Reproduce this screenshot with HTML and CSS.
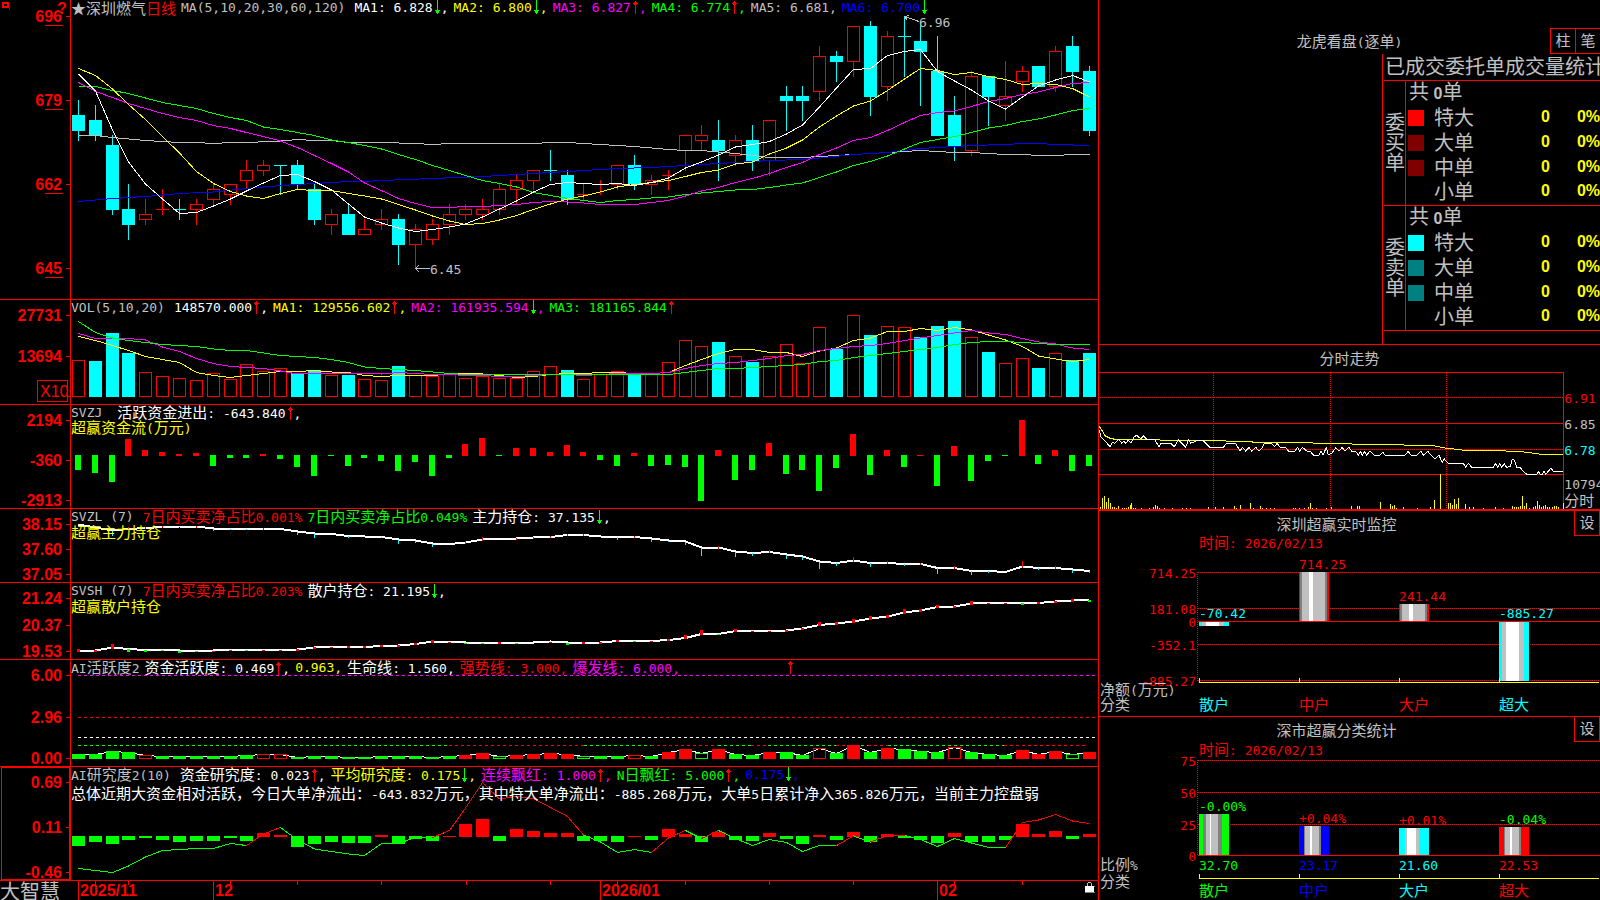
FILE: index.html
```html
<!DOCTYPE html>
<html lang="zh-CN">
<head>
<meta charset="utf-8">
<title>深圳燃气 日线 - 大智慧</title>
<link rel="stylesheet" href="styles.css">
</head>
<body>
<svg class="defs" aria-hidden="true">
  <symbol id="up" viewBox="0 0 8 15"><path class="up" d="M4 1h1v13h-1zM3 2h3v1h-3zM2 3h5v1h-5zM3 4h3v1h-3z"/></symbol>
  <symbol id="down" viewBox="0 0 8 15"><path class="down" d="M4 0h1v14h-1zM2 10h5v1h-5zM3 11h3v1h-3zM3 12h3v1h-3z"/></symbol>
</svg>
<div class="terminal">
  <main class="charts">
    <section class="panel">
      <svg class="chart" data-chart="price"></svg>
      <div class="legend">
        <div class="row">
          <span class="silver title-item">★深圳燃气<span class="red">日线</span></span>
          <span class="num silver title-item">MA(5,10,20,30,60,120)</span>
          <span class="num white">MA1: 6.828<svg class="arr"><use href="#down"/></svg>,</span>
          <span class="num yellow">MA2: 6.800<svg class="arr"><use href="#down"/></svg>,</span>
          <span class="num magenta">MA3: 6.827<svg class="arr"><use href="#up"/></svg>,</span>
          <span class="num green">MA4: 6.774<svg class="arr"><use href="#up"/></svg>,</span>
          <span class="num silver">MA5: 6.681,</span>
          <span class="num blue">MA6: 6.700<svg class="arr"><use href="#down"/></svg></span>
        </div>
      </div>
    </section>
    <section class="panel">
      <svg class="chart" data-chart="volume"></svg>
      <div class="legend">
        <div class="row">
          <span class="num silver title-item">VOL(5,10,20)</span>
          <span class="num white">148570.000<svg class="arr"><use href="#up"/></svg>,</span>
          <span class="num yellow">MA1: 129556.602<svg class="arr"><use href="#up"/></svg>,</span>
          <span class="num magenta">MA2: 161935.594<svg class="arr"><use href="#down"/></svg>,</span>
          <span class="num green">MA3: 181165.844<svg class="arr"><use href="#up"/></svg></span>
        </div>
      </div>
    </section>
    <section class="panel">
      <svg class="chart" data-chart="flow"></svg>
      <div class="legend">
        <div class="row">
          <span class="num silver wide-item">SVZJ</span>
          <span class="white">活跃资金进出<span class="num">: -643.840<svg class="arr"><use href="#up"/></svg>,</span></span>
        </div>
        <div class="row"><span class="yellow">超赢资金流<span class="num">(</span>万元<span class="num">)</span></span></div>
      </div>
    </section>
    <section class="panel">
      <svg class="chart" data-chart="major"></svg>
      <div class="legend">
        <div class="row">
          <span class="num silver title-item">SVZL (7)</span>
          <span class="red"><span class="num">7</span>日内买卖净占比<span class="num">0.001%</span></span>
          <span class="green"><span class="num">7</span>日内买卖净占比<span class="num">0.049%</span></span>
          <span class="white">主力持仓<span class="num">: 37.135<svg class="arr"><use href="#down"/></svg>,</span></span>
        </div>
        <div class="row"><span class="yellow">超赢主力持仓</span></div>
      </div>
    </section>
    <section class="panel">
      <svg class="chart" data-chart="retail"></svg>
      <div class="legend">
        <div class="row">
          <span class="num silver title-item">SVSH (7)</span>
          <span class="red"><span class="num">7</span>日内买卖净占比<span class="num">0.203%</span></span>
          <span class="white">散户持仓<span class="num">: 21.195<svg class="arr"><use href="#down"/></svg>,</span></span>
        </div>
        <div class="row"><span class="yellow">超赢散户持仓</span></div>
      </div>
    </section>
    <section class="panel">
      <svg class="chart" data-chart="active"></svg>
      <div class="legend">
        <div class="row">
          <span class="silver"><span class="num">AI</span>活跃度<span class="num">2</span></span>
          <span class="white">资金活跃度<span class="num">: 0.469<svg class="arr"><use href="#up"/></svg>,</span></span>
          <span class="num yellow">0.963,</span>
          <span class="white">生命线<span class="num">: 1.560,</span></span>
          <span class="red">强势线<span class="num">: 3.000,</span></span>
          <span class="magenta">爆发线<span class="num">: 6.000,</span></span>
          <svg class="arr far-arr"><use href="#up"/></svg>
        </div>
      </div>
    </section>
    <section class="panel">
      <svg class="chart" data-chart="study"></svg>
      <div class="legend">
        <div class="row">
          <span class="silver title-item"><span class="num">AI</span>研究度<span class="num">2(10)</span></span>
          <span class="white">资金研究度<span class="num">: 0.023<svg class="arr"><use href="#up"/></svg>,</span></span>
          <span class="yellow">平均研究度<span class="num">: 0.175<svg class="arr"><use href="#down"/></svg>,</span></span>
          <span class="magenta">连续飘红<span class="num">: 1.000<svg class="arr"><use href="#up"/></svg>,</span></span>
          <span class="green"><span class="num">N</span>日飘红<span class="num">: 5.000<svg class="arr"><use href="#up"/></svg>,</span></span>
          <span class="num blue">0.175<svg class="arr"><use href="#down"/></svg>,</span>
        </div>
        <p class="row summary white"><span>总体近期大资金相对活跃，今日大单净流出：<span class="num">-643.832</span>万元，其中特大单净流出：<span class="num">-885.268</span>万元，大单<span class="num">5</span>日累计净入<span class="num">365.826</span>万元，当前主力控盘弱</span></p>
      </div>
    </section>
    <footer class="timeline">
      <svg class="chart" data-chart="time"></svg>
      <div class="brand">大智慧</div>
    </footer>
  </main>

  <aside class="side">
    <section class="orders">
      <header class="orders-head">
        <h2>龙虎看盘<span class="num">(</span>逐单<span class="num">)</span></h2>
        <div class="modes"><button type="button">柱</button><button type="button">笔</button></div>
      </header>
      <div class="stats">
        <h3>已成交委托单成交量统计</h3>
        <table>
          <colgroup><col class="c-side"><col class="c-key"><col class="c-name"><col class="c-count"><col class="c-share"></colgroup>
          <tbody>
            <tr><th rowspan="5"><span>委买单</span></th><td colspan="4" class="total">共 <b>0</b>单</td></tr>
            <tr><td><i class="key k-red"></i></td><td>特大</td><td class="v">0</td><td class="v">0%</td></tr>
            <tr><td><i class="key k-maroon"></i></td><td>大单</td><td class="v">0</td><td class="v">0%</td></tr>
            <tr><td><i class="key k-maroon"></i></td><td>中单</td><td class="v">0</td><td class="v">0%</td></tr>
            <tr><td></td><td>小单</td><td class="v">0</td><td class="v">0%</td></tr>
          </tbody>
          <tbody>
            <tr><th rowspan="5"><span>委卖单</span></th><td colspan="4" class="total">共 <b>0</b>单</td></tr>
            <tr><td><i class="key k-cyan"></i></td><td>特大</td><td class="v">0</td><td class="v">0%</td></tr>
            <tr><td><i class="key k-teal"></i></td><td>大单</td><td class="v">0</td><td class="v">0%</td></tr>
            <tr><td><i class="key k-teal"></i></td><td>中单</td><td class="v">0</td><td class="v">0%</td></tr>
            <tr><td></td><td>小单</td><td class="v">0</td><td class="v">0%</td></tr>
          </tbody>
        </table>
      </div>
    </section>
    <section class="intraday">
      <h2>分时走势</h2>
      <svg class="chart" data-chart="intraday"></svg>
    </section>
    <section class="monitor ruled">
      <svg class="chart" data-chart="monitor"></svg>
      <header class="monitor-head"><h2>深圳超赢实时监控</h2><button type="button">设</button></header>
    </section>
    <section class="monitor">
      <svg class="chart" data-chart="classes"></svg>
      <header class="monitor-head"><h2>深市超赢分类统计</h2><button type="button">设</button></header>
    </section>
  </aside>
</div>
<script src="app.js"></script>
</body>
</html>
```
FILE: styles.css
```css
* { box-sizing: border-box; }
body {
  margin: 0;
  background: #000;
  color: #c0c0c0;
  font: 15px/15px "Noto Sans CJK SC", sans-serif;
}
h2, h3, p { margin: 0; font-size: 15px; font-weight: 400; }
.defs { display: none; }
.up { fill: #f00; }
.down { fill: #0f0; }

.silver { color: #c0c0c0; }
.white { color: #fff; }
.red { color: #f00; }
.yellow { color: #ff0; }
.magenta { color: #f0f; }
.green { color: #0f0; }
.blue { color: #00f; }

.num {
  font-family: "DejaVu Sans Mono", "Liberation Mono", monospace;
  font-size: 13px;
  white-space: pre;
}

.terminal {
  display: grid;
  grid-template-columns: minmax(0, 1099fr) minmax(0, 501fr);
  grid-template-rows: minmax(0, 1fr);
  height: 100vh;
  overflow: hidden;
}
.charts {
  display: grid;
  grid-template-rows:
    minmax(0, 300fr) minmax(0, 105fr) minmax(0, 104fr) minmax(0, 74fr)
    minmax(0, 77fr) minmax(0, 107fr) minmax(0, 114fr) minmax(0, 19fr);
  border-right: 1px solid #f00;
  min-width: 0;
  min-height: 0;
}
.panel, .timeline, .monitor {
  display: grid;
  grid-template: minmax(0, 1fr) / minmax(0, 1fr);
  min-height: 0;
}
.panel { border-bottom: 1px solid #f00; }
.panel > *, .timeline > *, .monitor > * { grid-area: 1 / 1; }
.chart { display: block; width: 100%; height: 100%; min-height: 0; overflow: hidden; }

.legend { padding-left: 71px; white-space: nowrap; }
.row { display: flex; gap: 5px; height: 15px; align-items: center; }
.title-item { margin-right: 4px; }
.title-item:first-child:has(.red) { margin-right: 0; }
.wide-item { margin-right: 10px; }
.arr { width: 8px; height: 15px; vertical-align: -3px; }
.far-arr { margin-left: 101px; }
.summary { margin-top: 4px; }
.brand { font-size: 20px; line-height: 19px; }

/* svg text */
.t { font: 13px "DejaVu Sans Mono", "Liberation Mono", monospace; white-space: pre; }
.t .cn { font: 15px "Noto Sans CJK SC", sans-serif; }
.axis { font: bold 16px "Liberation Sans", Arial, sans-serif; fill: #f00; }
.scale { font: 16px "Liberation Sans", Arial, sans-serif; fill: #f00; }

.side {
  display: grid;
  grid-template-rows: minmax(0, 345fr) minmax(0, 166fr) minmax(0, 206fr) minmax(0, 183fr);
  min-width: 0;
  min-height: 0;
}
button {
  width: 26px;
  height: 26px;
  padding: 0 0 3px;
  border: 1px solid #f00;
  background: #000;
  color: #c0c0c0;
  font: 15px/15px "Noto Sans CJK SC", sans-serif;
}

.orders {
  display: grid;
  grid-template-rows: 54px minmax(0, 1fr);
  border-bottom: 1px solid #f00;
  overflow: hidden;
}
.orders-head {
  display: grid;
  grid-template-columns: 1fr auto 1fr;
  align-items: end;
}
.orders-head h2 { grid-column: 2; padding-bottom: 4px; }
.modes { display: flex; justify-content: flex-end; }
.modes button { border-right: 0; width: 25px; }
.stats {
  width: 218px;
  margin-left: auto;
  padding-left: 1px;
  border-left: 1px solid #f00;
  overflow: hidden;
  font-size: 20px;
}
.stats h3 {
  height: 27px;
  padding-left: 1px;
  border-bottom: 1px solid #f00;
  font-size: 20px;
  line-height: 24px;
  white-space: nowrap;
}
table {
  width: 216px;
  table-layout: fixed;
  border-spacing: 0;
}
.c-side { width: 22px; }
.c-key { width: 28px; }
.c-name { width: 60px; }
.c-count { width: 56px; }
.c-share { width: 50px; }
tr { height: 25px; }
td { padding: 0 0 4px; line-height: 18px; white-space: nowrap; }
th {
  padding: 0;
  border-right: 1px solid #f00;
  border-bottom: 1px solid #f00;
  font-weight: 400;
  line-height: 20px;
}
th span { writing-mode: vertical-rl; }
tr:last-child td { border-bottom: 1px solid #f00; }
.total { padding-left: 3px; }
.total b, .v { font: bold 16px/16px "Liberation Sans", Arial, sans-serif; }
.v { color: #ff0; text-align: right; }
.key { display: block; width: 16px; height: 16px; margin: 3px 0 0 2px; }
.k-red { background: #f00; }
.k-maroon { background: #800000; }
.k-cyan { background: #0ff; }
.k-teal { background: #008080; }

.intraday { display: grid; grid-template-rows: 27px minmax(0, 1fr); min-height: 0; }
.intraday h2 { text-align: center; line-height: 25px; }
.ruled { border-bottom: 1px solid #f00; }
.monitor-head { display: flex; align-items: start; }
.monitor-head h2 { flex: 1; text-align: center; line-height: 25px; }
.monitor-head button { height: 25px; border-top: 0; }
```
FILE: app.js
```js
const RED = '#f00', CYAN = '#0ff', GREEN = '#0f0', YELLOW = '#ff0', WHITE = '#fff',
  MAGENTA = '#f0f', BLUE = '#00f', SILVER = '#c0c0c0', GRAY = '#808080';

/* A drawing surface: maps a chart's own coordinates to the size of its svg. */
class Surface {
  constructor(svg, d) {
    const box = svg.getBoundingClientRect();
    this.svg = svg;
    this.d = d;
    this.fixed = d.fixed || 0;
    this.kx = (box.width - this.fixed) / (d.w - this.fixed);
    this.ky = box.height / d.h;
    this.out = [];
  }
  x(v) { v -= this.d.x; return v <= this.fixed ? v : this.fixed + (v - this.fixed) * this.kx; }
  y(v) { return (v - this.d.y) * this.ky; }
  rect(x0, y0, x1, y1, fill) {
    const a = Math.round(this.x(x0)), b = Math.round(this.y(y0));
    const w = Math.max(1, Math.round(this.x(x1)) - a), h = Math.max(1, Math.round(this.y(y1)) - b);
    this.out.push(`<rect x="${a}" y="${b}" width="${w}" height="${h}" fill="${fill}"/>`);
  }
  box(x0, y0, x1, y1, stroke) {
    const a = Math.round(this.x(x0)), b = Math.round(this.y(y0));
    const w = Math.round(this.x(x1)) - a - 1, h = Math.round(this.y(y1)) - b - 1;
    this.out.push(`<rect x="${a + .5}" y="${b + .5}" width="${w}" height="${Math.max(1, h)}" fill="none" stroke="${stroke}"/>`);
  }
  line(points, stroke, width = 1, dash = '') {
    const p = points.map(([x, y]) => `${this.x(x).toFixed(1)},${this.y(y).toFixed(1)}`).join(' ');
    this.out.push(`<polyline points="${p}" fill="none" stroke="${stroke}" stroke-width="${width}" stroke-dasharray="${dash}"/>`);
  }
  h(y, x0, x1, stroke, dash) {
    const v = Math.floor(this.y(y) + .01) + .5;
    this.out.push(`<line x1="${this.x(x0)}" x2="${this.x(x1)}" y1="${v}" y2="${v}" stroke="${stroke}" stroke-dasharray="${dash || ''}"/>`);
  }
  v(x, y0, y1, stroke, dash) {
    const u = Math.floor(this.x(x) + .01) + .5;
    this.out.push(`<line y1="${this.y(y0)}" y2="${this.y(y1)}" x1="${u}" x2="${u}" stroke="${stroke}" stroke-dasharray="${dash || ''}"/>`);
  }
  text(x, y, str, fill, cls = 't', anchor = 'start') {
    const body = str.replace(/[\u4e00-\u9fff]+/g, m => `<tspan class="cn">${m}</tspan>`);
    const drop = cls === 't' ? 5 : 6;
    this.out.push(`<text class="${cls}" x="${this.x(x)}" y="${Math.round(this.y(y)) + drop}" fill="${fill}" text-anchor="${anchor}">${body}</text>`);
  }
  raw(s) { this.out.push(s); }
  done() { this.svg.innerHTML = `<g shape-rendering="crispEdges">${this.out.join('')}</g>`; }
}

const X = i => Math.floor(78.4 + 16.85 * i);
const series = ys => Array.isArray(ys)
  ? ys.map((y, i) => [X(i) + .5, y])
  : Object.entries(ys).map(([i, y]) => [X(+i) + .5, y]);

function axis(s, top, bottom, labels) {
  s.v(70, top, bottom, RED);
  for (const [label, y] of labels) {
    s.h(y, 66, 70, RED);
    s.text(62, y, label, RED, 'axis', 'end');
  }
}

/* [rising, high, body top, body bottom, low] for each trading day */
const candles = [
  [0,100,115,131,141],[0,105,120,136,141],[0,135,145,210,215],[0,184,209,225,240],[1,199,214,220,225],
  [1,189,209,210,215],[0,199,209,210,220],[1,199,204,210,225],[1,184,189,200,205],[1,184,184,195,205],
  [1,160,170,181,189],[1,160,165,171,176],[0,165,165,166,195],[0,160,165,184,189],[0,184,189,220,225],
  [1,209,214,225,235],[0,204,214,235,235],[1,219,229,235,235],[1,209,219,225,230],[0,214,219,245,265],
  [1,224,229,245,268],[1,219,224,240,245],[1,204,214,225,235],[1,204,209,215,220],[1,199,209,215,220],
  [1,184,189,210,215],[1,175,180,190,204],[1,170,170,181,190],[0,150,170,171,181],[0,170,175,200,205],
  [1,184,194,195,200],[1,180,184,185,195],[1,165,165,185,190],[0,155,165,184,190],[1,175,180,185,195],
  [1,170,175,176,190],[1,135,135,151,171],[1,125,135,141,151],[0,120,140,151,181],[1,135,140,156,166],
  [0,125,140,161,171],[1,120,120,161,176],[0,86,96,101,131],[0,86,96,101,121],[1,46,56,92,101],
  [0,51,56,62,82],[1,26,26,62,77],[0,21,26,97,116],[1,31,36,87,101],[0,16,36,37,77],
  [0,21,41,52,106],[0,36,71,136,136],[0,96,115,146,161],[1,71,76,151,156],[0,76,76,97,126],
  [1,61,96,106,121],[1,66,71,82,92],[0,66,66,87,87],[1,46,51,87,92],[0,36,46,72,87],[0,66,71,131,136]];

const ma = {
  silver: {0:135.5,1:135.5,2:137.5,4:140.5,6:142.5,7:142.5,8:143.5,9:142.5,10:142.5,12:141,13:139.5,14:140.5,15:140.5,16:142.5,18:142.5,20:143.5,21:144.5,22:143.5,27:143.5,28:142.5,29:142.5,31:144.5,33:146.5,35:149.5,36:150.5,37:150.5,39:153.5,41:157.5,43:157.5,45:155.5,47:153.5,50:150.5,52:152.5,53:152.5,55:154.5,56:154.5,57:155.5,58:155.5,59:154.5,60:154.5},
  blue: {0:201.5,2:198.5,4:196.5,6:193.5,8:192,10:188.5,12:185.5,14:183.5,16:181.5,17:181.5,18:180.5,21:178.5,24:176.5,27:173.5,29:171.5,32:168.5,34:167.5,36:165.5,38:163.5,40:161.5,41:160.5,43:159.5,44:158,46:154.5,48:152.5,50:148.5,52:146.5,53:145.5,55:144.5,56:143.5,57:143.5,58:144.5,60:145.5},
  green: [86.5,86.5,90.5,93.5,98,102.5,105.5,108.5,113.5,117.5,120.5,127,129.5,132.5,135.5,140,142.5,145.5,149,154.5,159.5,165.5,170.5,175.5,180.5,183.5,187,192.5,195.5,198.5,200.5,202.5,200.5,199.5,198,197,194.5,193,191.5,190,189.5,187.5,185,183,177.5,172,165.5,161.5,156,149,142.5,139.5,136.5,132.5,128,125.5,121.5,119,115,110.5,108.5],
  magenta: [82.5,91.5,97.5,103.5,108.5,113.5,117.5,120.5,125.5,128.5,132.5,136.5,141,147.5,155.5,163.5,172,183,190.5,198.5,203.5,207.5,207.5,206.5,206.5,205.5,204.5,202.5,201.5,202,203,204.5,204.5,204.5,202.5,200.5,196,191,187.5,182.5,178.5,173.5,167.5,162.5,154.5,148,140.5,137.5,130.5,122.5,115.5,112.5,111,106.5,101.5,98.5,94.5,92,87.5,83.5,82.5],
  yellow: [68.5,75.5,89,104.5,119.5,136.5,153,171.5,183.5,191.5,196,198.5,193.5,189.5,190.5,190.5,193.5,196,199,204.5,210,216,221,224.5,223.5,220,215.5,209.5,204,199,196,192,187,184.5,182.5,180.5,176.5,172.5,170,164,162,154,148,140,127,116,106,101,90.5,79,68.5,70.5,74.5,72.5,76.5,79.5,84.5,83.5,84.5,88.5,97],
  white: [74,91,130,162,184,199,213.5,212.5,206,199,191,183,175.5,174.5,181.5,190,204,217,223,228,231.5,229.5,227,224,217,209,201,192,184.5,182.5,183.5,184.5,183.5,185.5,182.5,178,168,162,155,147,144.5,141.5,134,125,107,88,69.5,68.5,55.5,51.5,49.5,71.5,81,90,101,109,97,86,80,75.5,82]
};

/* "c" falling day, "r" rising day; top of each column */
const volumeKind = 'rcccrrrrrrrrrccrcrrcrrrrrrrrrcrrrcrrrrcrcrrrrcrcrrcccrcrrcrcc';
const volumeTop = [360,361,333,353,372,376,378,380,373,379,364,371,368,373,370,375,375,379,380,366,375,376,374,378,376,378,378,371,366,370,379,374,371,374,374,362,340,346,342,356,362,356,344,363,327,349,315,335,326,327,337,326,321,337,352,363,358,368,353,360,353];
const volumeMa = {
  yellow: [336.5,340.5,345.5,350.5,356.5,359.5,362.5,372.5,375.5,377.5,375.5,373.5,371.5,371.5,370.5,372,372.5,375.5,376.5,375.5,375.5,375.5,374,373.5,374,375.5,377.5,376.5,374.5,373.5,373.5,372.5,372.5,373.5,373.5,372.5,365.5,359.5,353.5,349.5,349.5,352.5,352.5,356.5,351,348,340.5,338,331.5,331.5,328.5,330.5,327.5,330,335,340,346.5,356,359,361.5,359.5],
  magenta: [333.5,338.5,338.5,338.5,340,347,351.5,358.5,363.5,366.5,367.5,368.5,371,374,373.5,373.5,373.5,373.5,374,372.5,373.5,374.5,374.5,375.5,375.5,376.5,376.5,375.5,374.5,374.5,375.5,374.5,373.5,373.5,373.5,372.5,368.5,365.5,363.5,362.5,360.5,358.5,355.5,354.5,350.5,348.5,346.5,345.5,343.5,340.5,338,335.5,333,330.5,333,334.5,338.5,342,344,348,349.5],
  green: [321.5,332.5,338,340.5,342.5,344.5,345.5,346.5,349,350.5,350.5,353,355.5,356.5,357.5,359.5,362.5,367,368.5,369.5,370.5,372,373.5,374.5,374.5,374.5,374.5,374.5,374.5,374.5,374.5,374.5,374.5,374.5,374.5,374.5,372.5,370.5,368.5,368.5,367.5,366.5,365.5,364.5,361.5,360.5,357.5,355.5,353.5,351.5,349.5,347.5,344.5,342.5,341.5,341.5,342.5,343.5,344.5,344.5,344.5]
};

/* far end of each column; above the zero line is an inflow */
const flow = [470,473,482,439,450,452,454,453,466,458,458,454,459,467,476,457,466,458,461,471,462,476,458,444,438,457,448,448,452,445,452,460,466,453,466,465,467,501,450,480,470,443,474,470,491,468,434,475,450,467,455,486,446,481,461,457,420,464,450,471,466];

const major = [524.5,527.5,530.5,529,528,527,526.5,526.5,528.5,529,529,529,529,531.5,533.5,534,536,536.5,537,539.5,540.5,543.5,544,542.5,539.5,539,538.5,537.5,537,535,535,536.5,537,537,538.5,540.5,541.5,547.5,547.5,551.5,553,552,554.5,556.5,561.5,563,560.5,563,563,564,564,568,568,571,571,572,566.5,568,568,569.5,571];
const majorDown = {2:5,8:2,9:1,10:1,13:3,14:4,16:2,18:1,19:4,20:2,21:3,32:3,34:3,35:1,36:3,37:8,39:5,40:3,42:4,43:3,44:7,45:3,47:4,49:2,51:6,53:4,54:2,57:2,59:3,60:2};
const majorUp = {3:2,4:1,5:1,7:1,11:1,23:2,24:3,26:1,27:1,28:1,29:1,30:1,33:1,38:2,41:2,46:4,48:2,50:1,52:2,56:6,58:2};

const retail = [650.5,650.5,647.5,649,650,650,650.5,651,650.5,650,650,650,650,649.5,647.5,647,647,647,646,645.5,644,641.5,641.5,642.5,642.5,642.5,642.5,642.5,641.5,642.5,642.5,642.5,641,641,641,640,638,634,634,631,631,631,630.5,628.5,625,623.5,621.5,618.5,616.5,612.5,610.5,607,606.5,603.5,602.5,602.5,603,603,601.5,600.5,600];
const retailUp = {0:2,1:1,2:4,8:0,9:0,11:0,12:0,13:1,14:1,15:0,16:1,17:1,18:1,19:1,20:1,21:2,22:0,25:1,28:0,30:1,31:1,32:1,34:0,35:1,36:3,37:4,39:2,40:0,41:0,42:1,43:1,44:3,45:2,46:3,47:3,48:2,49:4,50:2,51:2,52:1,53:3,54:0,55:0,57:1,58:1,59:2};
const retailDown = {3:2,4:1,5:0,6:1,7:0,10:0,23:0,24:0,26:0,29:1,33:0,38:0,56:1,60:1};

/* g/r solid, G/R hollow */
const activeKind = 'ggggRggggggRRggggggggggrrGrrrrGggRgrrGrggrggRgrgrgggRgggrrrGr';
const activeTop = [754,754,751,752,755,756,756,756,756,756,755,754,754,757,756,756,757,757,756,756,756,757,756,755,753,756,755,754,753,754,756,756,756,755,756,752,749,753,749,754,755,752,752,755,748,753,745,752,748,749,751,752,747,752,754,755,750,754,751,754,752];
const activeBand = [[78,449,GREEN],[449,584,RED],[584,651,GREEN],[651,718,RED],[718,751,GREEN],[751,768,RED],[768,836,GREEN],[836,855,RED],[855,868,GREEN],[868,888,RED],[888,1004,GREEN],[1004,1086,RED]];

const study = [846,842,844,840,838,840,842,841,841,838,841,833,835,847,844,842,843,843,835,844,839,841,836,824,819,841,829,831,833,833,841,841,842,836,840,829,834,842,832,840,841,833,839,844,835,840,832,842,834,838,840,843,833,842,842,840,824,834,831,839,834];
const studyLine = [868.5,870.5,872.5,866,857,850.5,849.5,848.5,848.5,843.5,845.5,834,827.5,840,849,851.5,854,855.5,843.5,843.5,837.5,837.5,830.5,808,782.5,799,796.5,798.5,807.5,816.5,835,842,852.5,849.5,852.5,838,830.5,838.5,830.5,838.5,845.5,839.5,842.5,851.5,845.5,845.5,836,842,835.5,835.5,839.5,846.5,838.5,843,847.5,847.5,822.5,820,814.5,821,823.5];
const studyRed = [[10,12],[21,30],[34,36],[37,38],[45,46],[47,49],[55,60]];

const avgPrice = [[12,258],[20,270],[30,287],[45,295],[60,298],[180,298],[200,301],[385,302],[400,304],[470,305],[475,307],[645,308],[660,310],[768,311],[775,313],[885,314],[1015,317],[1050,324],[1110,331],[1210,332],[1280,335],[1340,343],[1404,344]];
const lastPrice = [[12,270],[18,290],[30,303],[45,320],[52,308],[60,310],[72,298],[80,310],[86,304],[92,310],[100,301],[108,308],[118,290],[125,286],[138,297],[145,287],[155,298],[180,300],[192,320],[198,310],[228,310],[238,320],[250,300],[260,310],[272,322],[280,300],[287,310],[310,300],[325,302],[345,322],[385,322],[395,310],[422,310],[435,333],[443,322],[452,333],[462,322],[470,333],[482,322],[492,333],[500,325],[508,310],[530,310],[538,320],[547,310],[555,322],[572,322],[580,333],[600,333],[608,322],[614,333],[622,322],[635,333],[645,333],[655,345],[672,345],[678,334],[684,345],[694,323],[700,345],[710,340],[722,324],[732,334],[742,322],[750,334],[762,322],[770,334],[782,334],[790,345],[796,334],[802,345],[808,334],[815,345],[825,333],[838,345],[855,345],[864,336],[870,346],[930,346],[940,334],[948,346],[965,346],[978,334],[985,346],[998,334],[1008,346],[1020,358],[1032,346],[1042,368],[1048,357],[1060,370],[1105,370],[1112,382],[1120,370],[1130,382],[1195,382],[1202,370],[1208,382],[1214,372],[1220,382],[1228,372],[1235,382],[1246,380],[1252,358],[1258,360],[1265,382],[1275,382],[1285,394],[1295,403],[1325,403],[1330,394],[1335,403],[1342,403],[1347,394],[1352,403],[1368,384],[1375,394],[1404,394]];
const tickVolume = [[16,500],[22,474],[28,468],[34,486],[40,474],[46,489],[52,501],[58,501],[64,503],[70,498],[82,504],[88,504],[94,504],[100,502],[106,495],[109,489],[115,503],[121,503],[139,504],[163,504],[175,500],[181,495],[187,498],[193,504],[208,504],[232,504],[262,504],[274,504],[286,504],[338,500],[361,501],[385,500],[418,498],[424,504],[436,495],[466,489],[475,504],[496,498],[502,504],[514,504],[526,504],[538,504],[595,504],[601,504],[613,504],[628,504],[640,500],[646,489],[652,504],[664,504],[694,504],[709,501],[769,498],[787,498],[793,498],[856,486],[886,492],[892,498],[898,495],[904,504],[925,501],[967,504],[1006,501],[1018,480],[1036,402],[1060,489],[1066,489],[1072,495],[1078,477],[1084,492],[1090,474],[1111,492],[1123,502],[1135,501],[1163,504],[1199,501],[1225,504],[1252,498],[1258,500],[1264,501],[1270,500],[1276,497],[1282,468],[1288,498],[1294,489],[1303,503],[1313,500],[1320,498],[1327,483],[1333,495],[1339,500],[1345,498],[1351,495],[1357,500],[1363,502],[1370,501],[1376,498],[1382,498],[1388,501],[1405,489]];

/* A shaded cylinder: bands are [end offset, colour] across a 30-unit width. */
function cylinder(s, x, top, bottom, bands) {
  let from = 0;
  for (const [to, fill] of bands) {
    s.rect(x + from, top, x + to, bottom, fill);
    from = to;
  }
}
const thin = c => [[1,c],[3,GRAY],[10,SILVER],[14,WHITE],[26,SILVER],[28,GRAY],[30,c]];
const lit = c => [[3,c],[7,SILVER],[20,WHITE],[25,SILVER],[30,c]];
const inner = c => [[5,c],[6,GRAY],[11,SILVER],[13,WHITE],[20,SILVER],[22,GRAY],[30,c]];

const left = (y, h) => ({ x: 0, y, w: 1098, h, fixed: 71 });

const charts = {
  price: [left(0, 299), s => {
    axis(s, 0, 299, [['696', 16], ['679', 100], ['662', 184], ['645', 268]]);
    for (const y of [25, 109, 193, 277]) s.h(y, 45, 63, RED);
    s.raw(`<path d="M2 2h7v6h-7zM4 4v2h3v-2z" fill="${RED}" fill-rule="evenodd"/><path d="M4 8h1v1h4v-1h1v2h-1v-1h-4z" fill="#a00"/>`);
    s.raw('<text class="axis" x="57" y="14">?</text>');
    candles.forEach(([up, high, top, bottom, low], i) => {
      const x = X(i), c = up ? RED : CYAN;
      if (!up || bottom - top < 2) {
        s.rect(x, high, x + 1, low, c);
        s.rect(x - 6, top, x + 7, bottom, c);
      } else {
        if (top > high) s.rect(x, high, x + 1, top, c);
        if (low > bottom) s.rect(x, bottom, x + 1, low, c);
        s.box(x - 6, top, x + 7, bottom, c);
      }
    });
    s.line(series(ma.silver), SILVER);
    s.line(series(ma.blue), BLUE);
    s.line(series(ma.green), GREEN);
    s.line(series(ma.magenta), MAGENTA);
    s.line(series(ma.yellow), YELLOW);
    s.line(series(ma.white), WHITE);
    s.line([[430, 268.5], [415.5, 268.5]], SILVER);
    s.line([[419, 265], [415.5, 268.5], [419, 272]], SILVER);
    s.text(430, 269, '6.45', SILVER);
    s.line([[919, 21.5], [904.5, 16.5], [907, 20]], SILVER);
    s.line([[904.5, 16.5], [909, 15.5]], SILVER);
    s.text(919, 22, '6.96', SILVER);
  }],
  volume: [left(300, 104), s => {
    axis(s, 300, 404, [['27731', 315], ['13694', 356]]);
    s.h(396, 67, 70, RED);
    s.box(37, 380, 68, 402, RED);
    s.text(40, 391, 'X10', RED, 'scale');
    volumeTop.forEach((top, i) => {
      const x = X(i);
      if (volumeKind[i] === 'c') s.rect(x - 6, top, x + 7, 397, CYAN);
      else s.box(x - 6, top, x + 7, 397, RED);
    });
    s.line(series(volumeMa.yellow), YELLOW);
    s.line(series(volumeMa.magenta), MAGENTA);
    s.line(series(volumeMa.green), GREEN);
  }],
  flow: [left(405, 103), s => {
    axis(s, 405, 508, [['2194', 420], ['-360', 460], ['-2913', 500]]);
    flow.forEach((v, i) => v < 456
      ? s.rect(X(i) - 3, v, X(i) + 3, 456, RED)
      : s.rect(X(i) - 3, 455, X(i) + 3, v === 457 ? 456 : v, GREEN));
  }],
  major: [left(509, 73), s => {
    axis(s, 509, 582, [['38.15', 524], ['37.60', 549], ['37.05', 574]]);
    s.line(series(major), WHITE, 2);
    for (const [i, n] of Object.entries(majorDown)) s.rect(X(+i), major[i], X(+i) + 1, major[i] + n, CYAN);
    for (const [i, n] of Object.entries(majorUp)) s.rect(X(+i), major[i] - n, X(+i) + 1, major[i] + 1, RED);
  }],
  retail: [left(583, 76), s => {
    axis(s, 583, 659, [['21.24', 598], ['20.37', 625], ['19.53', 651]]);
    s.line(series(retail), WHITE, 2);
    for (const [i, n] of Object.entries(retailUp)) s.rect(X(+i) - 1, retail[i] - n, X(+i) + 2, retail[i] + 1, RED);
    for (const [i, n] of Object.entries(retailDown)) s.rect(X(+i) - 1, retail[i], X(+i) + 2, retail[i] + n + 1, GREEN);
  }],
  active: [left(660, 106), s => {
    axis(s, 660, 766, [['6.00', 675], ['2.96', 717], ['0.00', 758]]);
    s.h(675, 78, 1095, MAGENTA, '3 3');
    s.h(717, 78, 1095, RED, '3 3');
    s.h(737, 78, 1095, WHITE, '3 3');
    for (const [a, b, c] of activeBand) s.h(745, a, b, c, '3 3');
    s.line(series([...activeTop].map(y => y + .5)), WHITE);
    activeTop.forEach((top, i) => {
      const x = X(i), k = activeKind[i], c = /g/i.test(k) ? GREEN : RED;
      if (k === 'G' || k === 'R') s.box(x - 6, top, x + 7, 759, c);
      else s.rect(x - 6, top, x + 7, 759, c);
    });
  }],
  study: [left(767, 113), s => {
    axis(s, 767, 880, [['0.69', 782], ['0.11', 827], ['-0.46', 872]]);
    s.box(1, 767, 70, 880, RED);
    study.forEach((v, i) => v < 837
      ? s.rect(X(i) - 6, v, X(i) + 7, 837, RED)
      : s.rect(X(i) - 6, 836, X(i) + 7, v, GREEN));
    const pts = series(studyLine);
    s.line(pts, GREEN);
    for (const [a, b] of studyRed) s.line(pts.slice(a, b + 1), RED);
  }],
  time: [left(881, 19), s => {
    for (const x of [95, 128, 230, 297, 381, 466, 550, 617, 685, 769, 853, 954, 1022]) s.v(x, 881, 885, RED);
    for (const [x, label] of [[78, '2025/11'], [213, '12'], [600, '2026/01'], [937, '02']]) {
      s.v(x, 881, 900, RED);
      s.text(x + 2, 890, label, RED, 'axis');
    }
    const x = Math.round(s.x(1085));
    s.raw(`<path transform="translate(${x} 1)" d="M3 0h3v1h1v3h-1v-3h-3v3h-1v-3h1z" fill="${SILVER}"/>
      <path transform="translate(${x} 1)" d="M2 10h8v-5h-1v-1h1v7h-10v-1z" fill="${GRAY}"/>
      <rect x="${x}" y="5" width="9" height="6" fill="${WHITE}"/>`);
  }],
  intraday: [{ x: 12, y: 96, w: 1503, h: 417 }, s => {
    for (const y of [172, 328]) s.h(y, 15, 1404, RED, '1 1');
    for (const x of [355, 706, 1054]) s.v(x, 98, 507, RED, '1 1');
    for (const y of [97, 250, 403]) s.h(y, 12, 1406, RED);
    s.v(1405, 96, 507, RED);
    s.rect(12, 507, 1515, 513, RED);
    s.line(avgPrice, YELLOW);
    s.line(lastPrice, WHITE);
    for (const [x, top] of tickVolume) s.rect(x, top, x + 3, 507, YELLOW);
    s.text(1408, 175, '6.91', RED);
    s.text(1408, 252, '6.85', SILVER);
    s.text(1408, 331, '6.78', CYAN);
    s.text(1408, 433, '10794', SILVER);
    s.text(1408, 484, '分时', SILVER);
  }],
  monitor: [{ x: 1099, y: 511, w: 501, h: 205 }, s => {
    s.text(1199, 543, '时间: 2026/02/13', RED);
    for (const y of [572, 608, 644, 680]) s.h(y, 1198, 1600, RED, '1 1');
    s.v(1197, 572, 681, RED, '1 1');
    cylinder(s, 1199, 622, 626, lit(CYAN));
    cylinder(s, 1299, 572, 621, thin(RED));
    cylinder(s, 1399, 604, 621, thin(RED));
    cylinder(s, 1499, 622, 681, lit(CYAN));
    s.h(621, 1198, 1600, RED);
    s.h(682, 1199, 1599, YELLOW);
    for (const x of [1199, 1299, 1399, 1499]) s.v(x, 678, 682, YELLOW);
    for (const [t, y] of [['714.25', 573], ['181.08', 609], ['0', 622], ['-352.1', 645], ['-885.27', 681]])
      s.text(1196, y, t, RED, 't', 'end');
    s.text(1199, 613, '-70.42', CYAN);
    s.text(1299, 564, '714.25', RED);
    s.text(1399, 596, '241.44', RED);
    s.text(1499, 613, '-885.27', CYAN);
    s.text(1100, 690, '净额(万元)', SILVER);
    s.text(1100, 705, '分类', SILVER);
    for (const [x, t, c] of [[1199, '散户', CYAN], [1299, '中户', RED], [1399, '大户', RED], [1499, '超大', CYAN]])
      s.text(x, 705, t, c);
  }],
  classes: [{ x: 1099, y: 717, w: 501, h: 183 }, s => {
    s.text(1199, 750, '时间: 2026/02/13', RED);
    for (const y of [760, 792, 824]) s.h(y, 1198, 1600, RED, '1 1');
    s.v(1197, 760, 856, RED, '1 1');
    cylinder(s, 1199, 814, 855, [[4,GREEN],[7,GRAY],[11,SILVER],[12,WHITE],[19,SILVER],[23,GRAY],[30,GREEN]]);
    cylinder(s, 1299, 826, 855, inner(BLUE));
    cylinder(s, 1399, 828, 855, [[6,CYAN],[8,SILVER],[17,WHITE],[20,SILVER],[30,CYAN]]);
    cylinder(s, 1499, 827, 855, inner(RED));
    s.h(855, 1198, 1600, RED);
    s.h(878, 1199, 1599, YELLOW);
    for (const x of [1199, 1299, 1399, 1499]) s.v(x, 874, 878, YELLOW);
    for (const [t, y] of [['75', 761], ['50', 793], ['25', 825], ['0', 856]]) s.text(1196, y, t, RED, 't', 'end');
    for (const [x, y, t, c] of [[1199, 806, '-0.00%', GREEN], [1299, 818, '+0.04%', RED], [1399, 820, '+0.01%', RED], [1499, 819, '-0.04%', GREEN]])
      s.text(x, y, t, c);
    for (const [x, v, t, c] of [[1199, '32.70', '散户', GREEN], [1299, '23.17', '中户', BLUE], [1399, '21.60', '大户', CYAN], [1499, '22.53', '超大', RED]]) {
      s.text(x, 865, v, c);
      s.text(x, 891, t, c);
    }
    s.text(1100, 865, '比例%', SILVER);
    s.text(1100, 882, '分类', SILVER);
  }]
};

function drawAll() {
  for (const svg of document.querySelectorAll('svg[data-chart]')) {
    const [domain, draw] = charts[svg.dataset.chart];
    const s = new Surface(svg, domain);
    draw(s);
    s.done();
  }
}
drawAll();
addEventListener('resize', drawAll);
```
